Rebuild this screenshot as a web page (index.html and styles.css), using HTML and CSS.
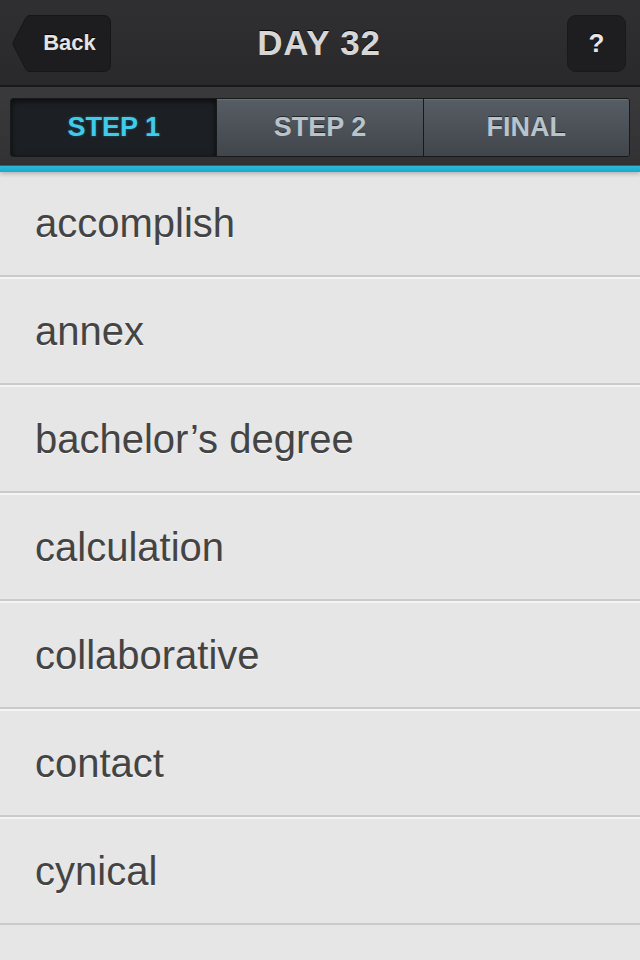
FILE: index.html
```html
<!DOCTYPE html>
<html>
<head>
<meta charset="utf-8">
<link rel="stylesheet" href="styles.css">
</head>
<body>
<header class="navbar">
  <div class="nav-left">
    <button class="back-btn">
      <svg class="back-shape" width="99" height="57" viewBox="0 0 99 57">
        <path d="M18 0.5 H91 Q98.5 0.5 98.5 8 V49 Q98.5 56.5 91 56.5 H18 Q15.5 56.5 14 54.5 L1.5 30.5 Q0.5 28.5 1.5 26.5 L14 2.5 Q15.5 0.5 18 0.5 Z" fill="#1d1d1f" stroke="#161617" stroke-width="1"/>
      </svg>
      <span class="back-label">Back</span>
    </button>
  </div>
  <h1 class="title">DAY 32</h1>
  <div class="nav-right">
    <button class="help-btn">?</button>
  </div>
</header>
<nav class="segbar">
  <div class="segments">
    <div class="seg seg-active">STEP 1</div>
    <div class="seg">STEP 2</div>
    <div class="seg">FINAL</div>
  </div>
</nav>
<div class="accent"></div>
<ul class="words">
  <li class="row">accomplish</li>
  <li class="row">annex</li>
  <li class="row">bachelor’s degree</li>
  <li class="row">calculation</li>
  <li class="row">collaborative</li>
  <li class="row">contact</li>
  <li class="row">cynical</li>
</ul>
</body>
</html>
```
FILE: styles.css
```css
html, body {
  margin: 0;
  padding: 0;
}
body {
  width: 640px;
  min-height: 960px;
  background: #e6e6e6;
  font-family: "Liberation Sans", Arial, Helvetica, sans-serif;
  overflow: hidden;
}
.navbar {
  height: 85px;
  background: linear-gradient(#303032, #29292b);
  border-bottom: 2px solid #19191a;
  display: grid;
  grid-template-columns: 1fr auto 1fr;
  align-items: center;
  padding: 0 14px 0 12px;
  box-sizing: content-box;
}
.nav-left {
  display: flex;
  justify-content: flex-start;
  padding-top: 1px;
}
.nav-right {
  display: flex;
  justify-content: flex-end;
  padding-top: 1px;
}
.back-btn {
  display: grid;
  width: 99px;
  height: 57px;
  padding: 0;
  border: 0;
  background: none;
  font: inherit;
}
.back-shape {
  grid-area: 1 / 1;
  display: block;
}
.back-label {
  grid-area: 1 / 1;
  align-self: center;
  justify-self: center;
  padding-left: 16px;
  color: #e4e4e4;
  font-size: 22px;
  font-weight: bold;
  text-shadow: 0 -1px 0 #000;
}
.title {
  margin: 0;
  color: #d6d6d6;
  font-size: 35px;
  font-weight: bold;
  letter-spacing: 0.8px;
  text-shadow: 0 -1px 0 #000;
}
.help-btn {
  width: 59px;
  height: 57px;
  border: 1px solid #19191a;
  border-radius: 9px;
  background: #1e1e20;
  color: #e6e6e6;
  font-family: "Liberation Sans", Arial, sans-serif;
  font-size: 26px;
  font-weight: bold;
  padding: 0;
  text-shadow: 0 -1px 0 #000;
}
.segbar {
  background: linear-gradient(#3a3a3d, #323235);
  padding: 11px 10px 8px 10px;
  height: 59px;
}
.segments {
  display: flex;
  height: 59px;
  box-sizing: border-box;
  border: 1px solid #17191b;
  border-radius: 3px;
  overflow: hidden;
}
.seg {
  flex: 1;
  display: flex;
  align-items: center;
  justify-content: center;
  background: linear-gradient(#575d64, #41464c);
  color: #b8c4cc;
  font-size: 27px;
  font-weight: bold;
  text-shadow: 0 -1px 0 rgba(0,0,0,0.55);
  box-shadow: inset 0 1px 0 rgba(255,255,255,0.12);
}
.seg + .seg {
  border-left: 1px solid #17191b;
}
.seg-active {
  background: #1c2024;
  color: #3fcbe9;
  box-shadow: inset 0 2px 6px rgba(0,0,0,0.7);
  text-shadow: 0 0 3px rgba(40,190,230,0.35);
}
.accent {
  height: 6px;
  background: linear-gradient(#2ab9d8, #1aa9c9);
  border-top: 1px solid #0f6f82;
  box-shadow: 0 2px 4px rgba(0,0,0,0.22);
  position: relative;
}
.words {
  list-style: none;
  margin: 0;
  padding: 0;
}
.row {
  height: 108px;
  box-sizing: border-box;
  display: flex;
  align-items: center;
  padding-left: 35px;
  border-top: 2px solid #f4f4f4;
  border-bottom: 2px solid #cbcbcb;
  background: #e6e6e6;
  color: #444444;
  font-size: 40px;
  text-shadow: 0 1px 0 rgba(255,255,255,0.7);
}
.row:first-child {
  height: 105px;
  border-top: 0;
}
```
